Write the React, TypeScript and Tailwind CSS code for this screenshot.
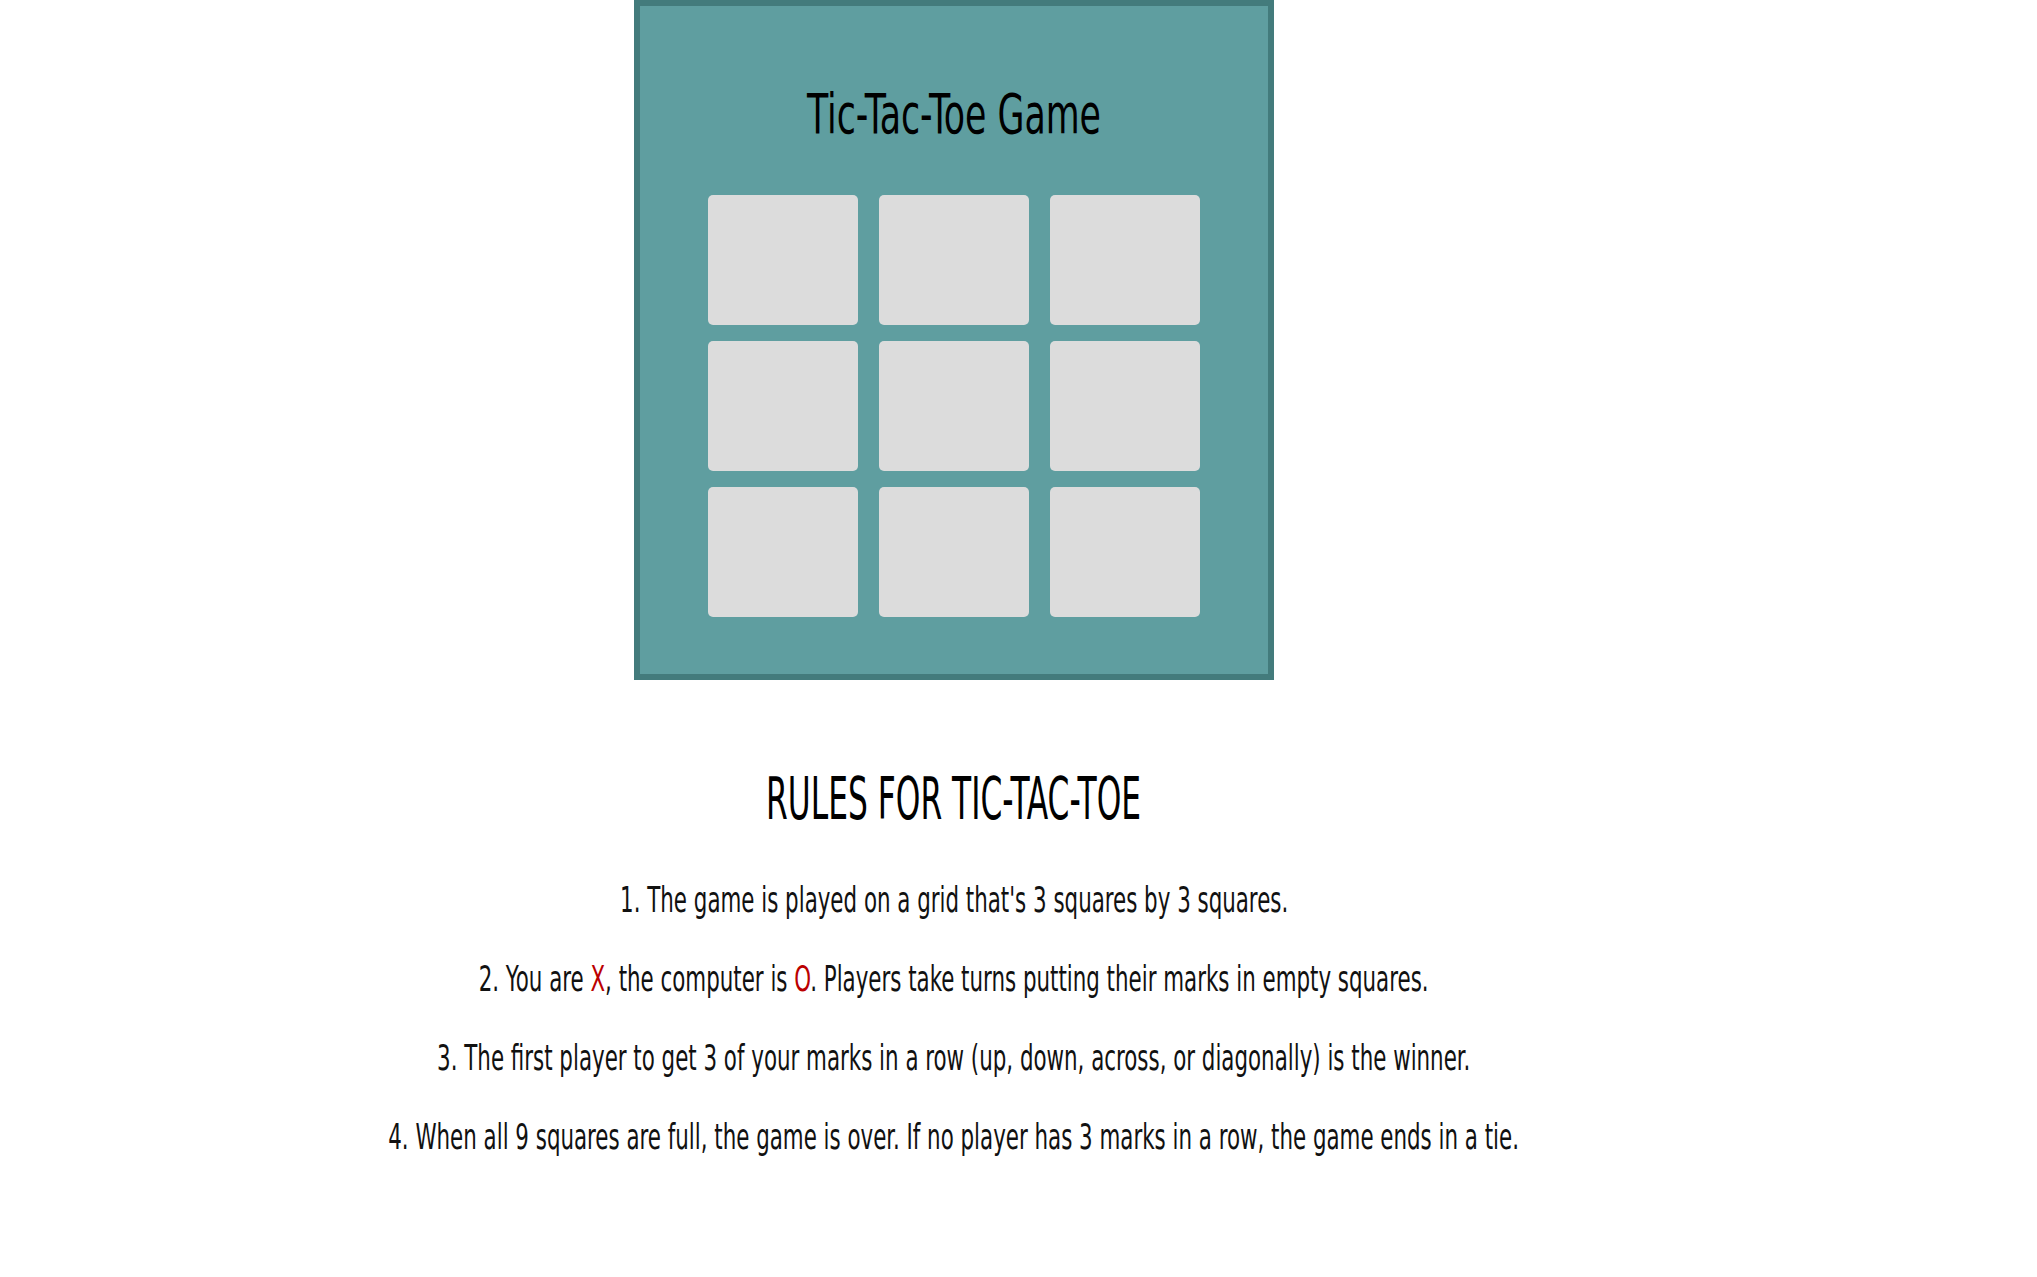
import React from "react";

const cells = Array.from({ length: 9 }, (_, i) => i);

const rules: React.ReactNode[] = [
  <>1. The game is played on a grid that's 3 squares by 3 squares.</>,
  <>
    2. You are <span className="text-[#bb0000]">X</span>, the computer is{" "}
    <span className="text-[#bb0000]">O</span>. Players take turns putting their marks in empty squares.
  </>,
  <>3. The first player to get 3 of your marks in a row (up, down, across, or diagonally) is the winner.</>,
  <>4. When all 9 squares are full, the game is over. If no player has 3 marks in a row, the game ends in a tie.</>,
];

export default function App() {
  return (
    <div className="min-h-screen w-full bg-white">
      <div className="w-[1908px] font-['Liberation_Sans_Narrow','DejaVu_Sans_Condensed','Liberation_Sans',sans-serif] text-black">
        {/* BOARD */}
        <div className="mx-auto flex h-[680px] w-[640px] flex-col items-center border-[6px] border-[#437b7c] bg-[#5f9ea0] pt-[80px]">
          <h1 className="inline-block scale-x-[0.69] text-[56px] leading-none font-normal whitespace-nowrap">
            Tic-Tac-Toe Game
          </h1>
          <div className="mt-[53px] grid grid-cols-[repeat(3,150px)] grid-rows-[repeat(3,130px)] gap-x-[21px] gap-y-[16px]">
            {cells.map((c) => (
              <button key={c} className="rounded-[5px] bg-[#dcdcdc]" />
            ))}
          </div>
        </div>

        {/* RULES */}
        <div className="mt-[90px] flex flex-col items-center">
          <h2 className="scale-x-[0.6] text-[58px] leading-none font-normal whitespace-nowrap">
            RULES FOR TIC-TAC-TOE
          </h2>
          <div className="mt-[32px] flex flex-col items-center text-[#111]">
            {rules.map((r, i) => (
              <p key={i} className="scale-x-[0.66] text-[36px] leading-[79px] whitespace-nowrap">
                {r}
              </p>
            ))}
          </div>
        </div>
      </div>
    </div>
  );
}
